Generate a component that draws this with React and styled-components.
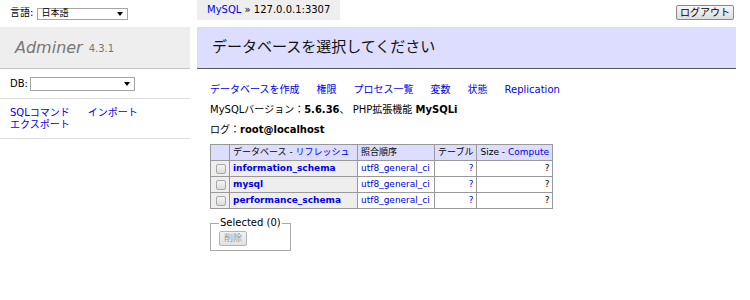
import React from 'react';
import styled, { createGlobalStyle } from 'styled-components';

const GlobalStyle = createGlobalStyle`
  body {
    margin: 0;
    background: #fff;
    color: #000;
    font: 10px/1.25 "DejaVu Sans", "Noto Sans CJK JP", sans-serif;
  }
  a {
    color: #0000ee;
    text-decoration: none;
  }
`;

const Page = styled.div`
  display: grid;
  grid-template-columns: 190px 539px;
  grid-template-rows: 27px 42px auto;
  column-gap: 7px;
  width: 736px;
`;

const LangBar = styled.div`
  display: flex;
  align-items: center;
  gap: 4px;
  padding: 0 10px;
`;

const FakeSelect = styled.div`
  display: flex;
  align-items: center;
  justify-content: space-between;
  box-sizing: border-box;
  width: ${(p) => p.width}px;
  height: ${(p) => p.height}px;
  padding: 0 4px 0 3px;
  border: 1px solid #a5a5a5;
  background: #fff;
  font-size: 9px;
`;

const TopBar = styled.div`
  display: flex;
  align-items: flex-start;
  justify-content: space-between;
`;

const Breadcrumb = styled.div`
  height: 20px;
  line-height: 20px;
  padding: 0 10px;
  background: #eee;
  white-space: nowrap;
`;

const Logout = styled.button`
  margin: 5px 2px 0 0;
  height: 15px;
  padding: 0 3px;
  font: 10px/1 "DejaVu Sans", "Noto Sans CJK JP", sans-serif;
  border: 1px solid #8a8a8a;
  border-radius: 2px;
  background: linear-gradient(#f6f6f6, #dedede);
  color: #000;
`;

const Title = styled.h1`
  box-sizing: border-box;
  margin: 0;
  height: 42px;
  display: flex;
  align-items: center;
  gap: 6px;
  padding: 0 15px;
  background: #eee;
  border-bottom: 1px solid #c4c4c4;
  font-size: 16px;
  font-weight: normal;
  font-style: italic;
  color: #777;
`;

const Version = styled.span`
  font-size: 10px;
  font-style: normal;
  margin-top: 4px;
`;

const Heading = styled.h2`
  box-sizing: border-box;
  margin: 0;
  height: 42px;
  display: flex;
  align-items: center;
  padding: 0 15px;
  background: #ddf;
  border-bottom: 1px solid #555;
  font-size: 15px;
  font-weight: normal;
  color: #111;
`;

const Menu = styled.div``;

const MenuSection = styled.div`
  display: flex;
  flex-wrap: wrap;
  align-items: center;
  column-gap: ${(p) => p.gap || 2}px;
  padding: 8px 10px 7px;
  line-height: 12px;
  border-bottom: 1px solid #ddd;
`;

const Content = styled.div`
  padding: 15px 0 0 13px;
`;

const Line = styled.p`
  display: flex;
  flex-wrap: wrap;
  column-gap: ${(p) => p.gap || 0}px;
  margin: 0 0 8px;
  line-height: 12px;
  white-space: pre;
`;

const Table = styled.table`
  margin-top: 8px;
  border-collapse: separate;
  border-spacing: 0;
  border-top: 1px solid #999;
  border-left: 1px solid #999;
  font-size: 9px;
  line-height: 11px;
`;

const Cell = styled.td`
  padding: 2px 3px;
  border-right: 1px solid #999;
  border-bottom: 1px solid #999;
  text-align: ${(p) => p.align || 'left'};
  background: ${(p) => p.bg || '#fff'};
  font-weight: ${(p) => (p.bold ? 'bold' : 'normal')};
  white-space: nowrap;
  width: ${(p) => (p.w ? `${p.w}px` : 'auto')};
`;

const Check = styled.input`
  appearance: none;
  display: block;
  width: 10px;
  height: 10px;
  margin: 0 0 0 2px;
  border: 1px solid #a8a8a8;
  border-radius: 2px;
  background: linear-gradient(#f4f4f4, #dcdcdc);
`;

const Fieldset = styled.fieldset`
  display: inline-block;
  margin: 8px 0 0;
  padding: 0 8px 4px 8px;
  border: 1px solid #a8a8a8;
`;

const Legend = styled.legend`
  padding: 0 1px;
  font-size: 10px;
`;

const DeleteButton = styled.button`
  height: 15px;
  padding: 0 4px;
  margin-top: 1px;
  font: 9px/1 "DejaVu Sans", "Noto Sans CJK JP", sans-serif;
  color: #999;
  border: 1px solid #b5b5b5;
  border-radius: 2px;
  background: linear-gradient(#f2f2f2, #e2e2e2);
`;

const Arrow = () => (
  <svg width="6" height="4" viewBox="0 0 6 4">
    <path d="M0 0h6L3 4z" fill="#000" />
  </svg>
);

const databases = ['information_schema', 'mysql', 'performance_schema'];

export default function App() {
  return (
    <>
      <GlobalStyle />
      <Page>
        <LangBar>
          言語:
          <FakeSelect width={91} height={12}>
            日本語
            <Arrow />
          </FakeSelect>
        </LangBar>
        <TopBar>
          <Breadcrumb>
            <a href="#">MySQL</a> » 127.0.0.1:3307
          </Breadcrumb>
          <Logout>ログアウト</Logout>
        </TopBar>

        <Title>
          Adminer <Version>4.3.1</Version>
        </Title>
        <Heading>データベースを選択してください</Heading>

        <Menu>
          <MenuSection>
            DB:
            <FakeSelect width={105} height={14}>
              <span />
              <Arrow />
            </FakeSelect>
          </MenuSection>
          <MenuSection gap={18}>
            <a href="#">SQLコマンド</a>
            <a href="#">インポート</a>
            <a href="#">エクスポート</a>
          </MenuSection>
        </Menu>

        <Content>
          <Line gap={17}>
            <a href="#">データベースを作成</a>
            <a href="#">権限</a>
            <a href="#">プロセス一覧</a>
            <a href="#">変数</a>
            <a href="#">状態</a>
            <a href="#">Replication</a>
          </Line>
          <Line>
            MySQLバージョン：<b>5.6.36</b>、 PHP拡張機能 <b>MySQLi</b>
          </Line>
          <Line>
            ログ：<b>root@localhost</b>
          </Line>
          <Table>
            <thead>
              <tr>
                <Cell bg="#ddf" w={12} />
                <Cell bg="#ddf" w={121}>
                  データベース - <a href="#">リフレッシュ</a>
                </Cell>
                <Cell bg="#ddf" w={70}>照合順序</Cell>
                <Cell bg="#ddf" w={34}>テーブル</Cell>
                <Cell bg="#ddf" w={69}>
                  Size - <a href="#">Compute</a>
                </Cell>
              </tr>
            </thead>
            <tbody>
              {databases.map((db) => (
                <tr key={db}>
                  <Cell bg="#eee">
                    <Check type="checkbox" />
                  </Cell>
                  <Cell bg="#eee" bold>
                    <a href="#">{db}</a>
                  </Cell>
                  <Cell>
                    <a href="#">utf8_general_ci</a>
                  </Cell>
                  <Cell align="right">
                    <a href="#">?</a>
                  </Cell>
                  <Cell align="right">?</Cell>
                </tr>
              ))}
            </tbody>
          </Table>
          <Fieldset>
            <Legend>Selected (0)</Legend>
            <DeleteButton disabled>削除</DeleteButton>
          </Fieldset>
        </Content>
      </Page>
    </>
  );
}
